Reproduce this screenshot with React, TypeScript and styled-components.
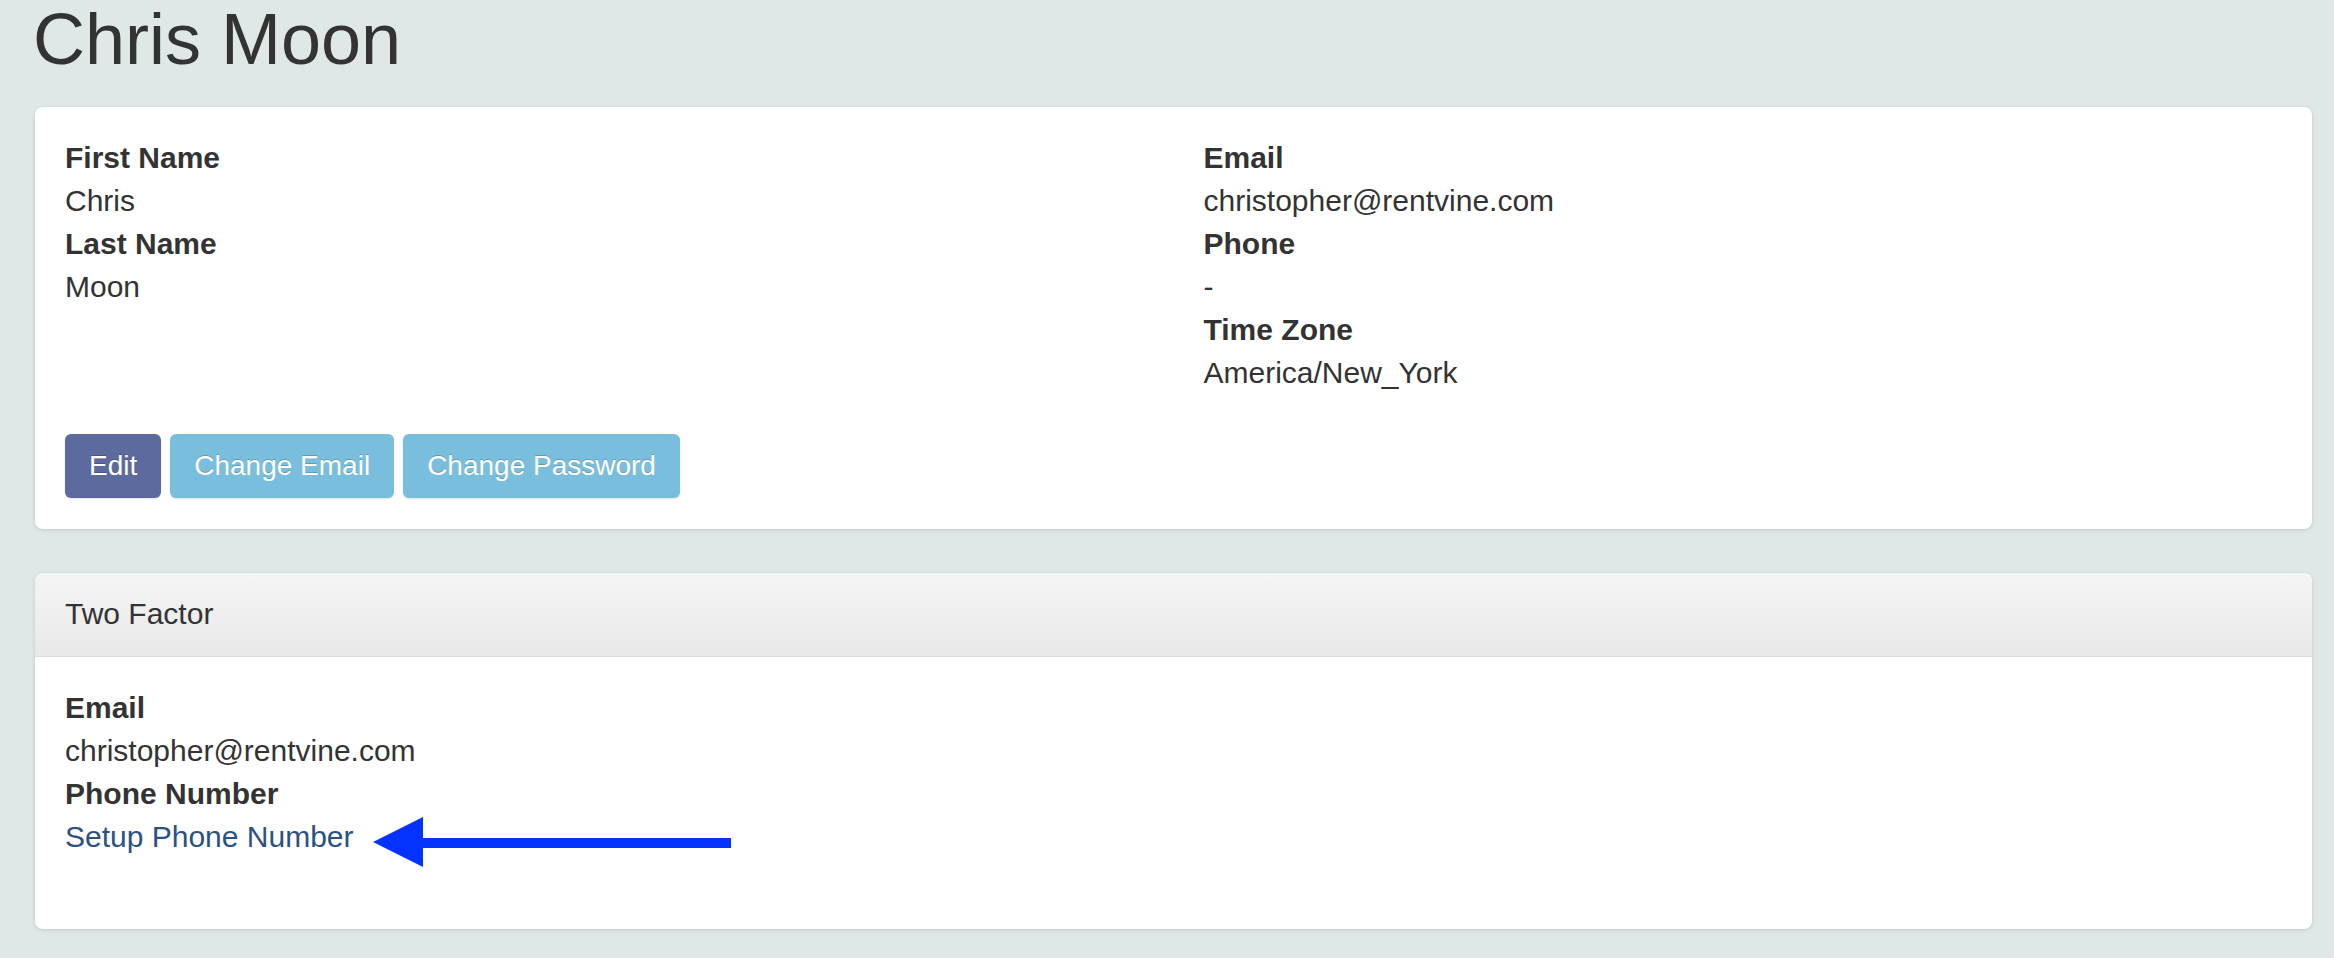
import React from "react";
import styled, { createGlobalStyle } from "styled-components";

const Global = createGlobalStyle`
  html, body { margin: 0; padding: 0; background: #dfe8e7; }
  body {
    font-family: "Liberation Sans", Arial, Helvetica, sans-serif;
    color: #333333;
    font-size: 30px;
    line-height: 43px;
  }
`;

const Page = styled.div`
  padding: 0 22px 30px 35px;
`;

const Title = styled.h1`
  margin: 0 0 28px -2px;
  font-size: 72px;
  font-weight: 400;
  line-height: 79px;
  color: #333333;
`;

const Panel = styled.section`
  background: #ffffff;
  border-radius: 8px;
  box-shadow: 0 1px 4px rgba(0, 0, 0, 0.13);
  margin-bottom: 44px;
  overflow: hidden;
  &:last-child {
    margin-bottom: 0;
  }
`;

const PanelHeading = styled.div`
  padding: 19px 30px 21px;
  background: linear-gradient(to bottom, #f5f5f5 0%, #e8e8e8 100%);
  border-bottom: 1px solid #dddddd;
  font-size: 30px;
  line-height: 43px;
`;

const PanelBody = styled.div<{ $bottom?: number }>`
  padding: 29px 30px ${(p) => p.$bottom ?? 31}px;
`;

const Columns = styled.div`
  display: grid;
  grid-template-columns: 1fr 1fr;
  column-gap: 60px;
`;

const Field = styled.dl`
  margin: 0;
`;

const Label = styled.dt`
  font-weight: 700;
`;

const Value = styled.dd`
  margin: 0;
`;

const LinkLine = styled.dd`
  margin: 0;
  position: relative;
`;

const Link = styled.a`
  color: #2b5283;
  text-decoration: none;
  cursor: pointer;
`;

const Arrow = styled.svg`
  position: absolute;
  left: 308px;
  top: 2px;
`;

const ButtonRow = styled.div`
  display: flex;
  gap: 9px;
  margin-top: 40px;
`;

const Button = styled.button<{ $variant: "primary" | "info" }>`
  font-family: "Liberation Sans", Arial, Helvetica, sans-serif;
  font-size: 28px;
  line-height: 40px;
  padding: 12px 24px;
  border: none;
  border-radius: 6px;
  color: #ffffff;
  text-shadow: 0 -1px 0 rgba(0, 0, 0, 0.2);
  box-shadow: 0 1px 2px rgba(0, 0, 0, 0.12);
  background: ${(p) => (p.$variant === "primary" ? "#5d6a9e" : "#79bedc")};
  cursor: pointer;
`;

export default function App() {
  return (
    <>
      <Global />
      <Page>
        <Title>Chris Moon</Title>
        <Panel>
          <PanelBody>
            <Columns>
              <Field>
                <Label>First Name</Label>
                <Value>Chris</Value>
                <Label>Last Name</Label>
                <Value>Moon</Value>
              </Field>
              <Field>
                <Label>Email</Label>
                <Value>christopher@rentvine.com</Value>
                <Label>Phone</Label>
                <Value>-</Value>
                <Label>Time Zone</Label>
                <Value>America/New_York</Value>
              </Field>
            </Columns>
            <ButtonRow>
              <Button $variant="primary">Edit</Button>
              <Button $variant="info">Change Email</Button>
              <Button $variant="info">Change Password</Button>
            </ButtonRow>
          </PanelBody>
        </Panel>
        <Panel>
          <PanelHeading>Two Factor</PanelHeading>
          <PanelBody $bottom={71}>
            <Field>
              <Label>Email</Label>
              <Value>christopher@rentvine.com</Value>
              <Label>Phone Number</Label>
              <LinkLine>
                <Link>Setup Phone Number</Link>
                <Arrow width="360" height="50" viewBox="0 0 360 50">
                  <polygon points="0,25 50,0 50,50" fill="#0433ff" />
                  <rect x="48" y="21" width="310" height="10" fill="#0433ff" />
                </Arrow>
              </LinkLine>
            </Field>
          </PanelBody>
        </Panel>
      </Page>
    </>
  );
}
